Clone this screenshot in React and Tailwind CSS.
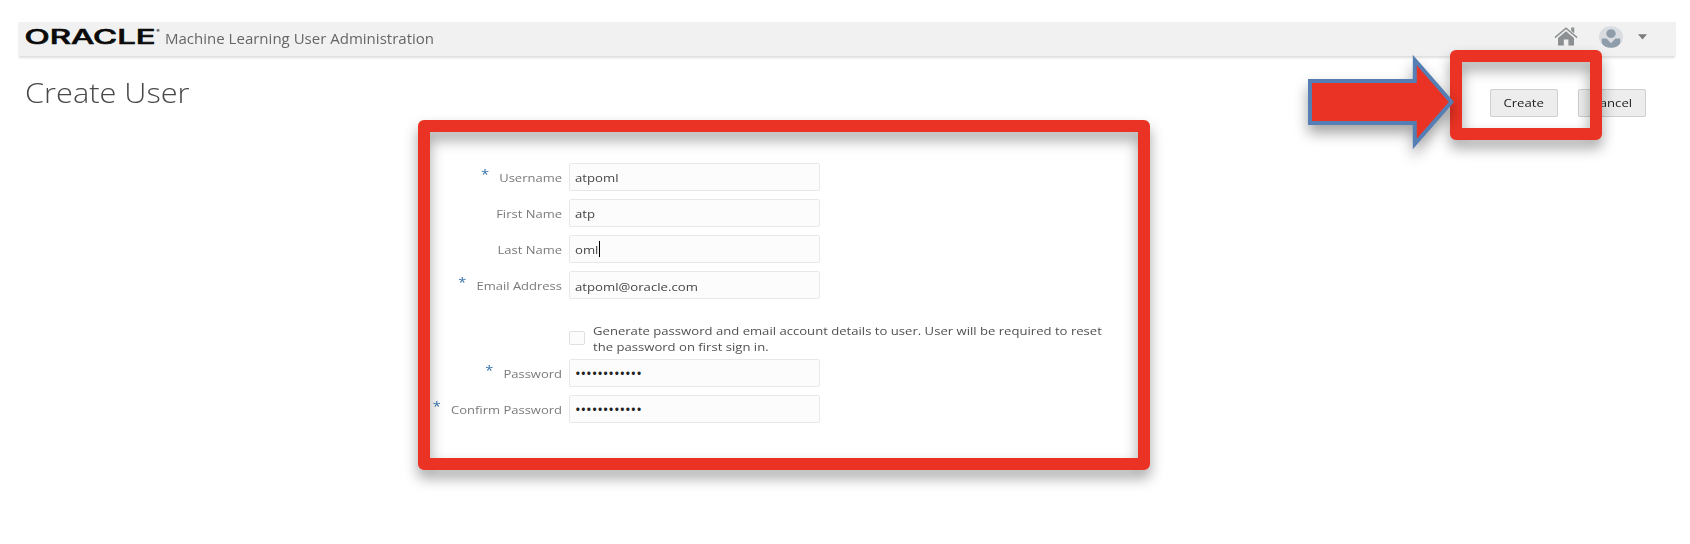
const fields = [
  { label: 'Username', required: true, value: 'atpoml' },
  { label: 'First Name', value: 'atp' },
  { label: 'Last Name', value: 'oml', focused: true },
  { label: 'Email Address', required: true, value: 'atpoml@oracle.com' },
];

const passwords = [
  { label: 'Password', required: true, secret: '••••••••••••' },
  { label: 'Confirm Password', required: true, secret: '••••••••••••' },
];

function Field({ label, required, value, secret, focused }) {
  return (
    <div className="flex h-7 items-center">
      <label className="flex w-[144px] origin-right scale-x-[1.13] justify-end whitespace-nowrap pt-[2px] text-[11.5px] leading-7 text-[#7a7a7a]">
        {required && <span className="mr-[9px] -mt-[4px] h-7 text-[13px] text-[#3672ad]">*</span>}
        {label}
      </label>
      <div className="ml-[7px] flex h-7 w-[251px] items-center rounded-[2px] border border-[#e8e8e8] bg-[#fcfcfc] pl-[5px]">
        {secret ? (
          <span className="pt-[1px] text-[15px] leading-none tracking-[-0.08px] text-[#222]">{secret}</span>
        ) : (
          <span className="origin-left scale-x-[1.145] pt-[2px] text-[11.5px] leading-none text-[#444]">{value}</span>
        )}
        {focused && <span className="ml-[4px] h-4 w-px bg-black" />}
      </div>
    </div>
  );
}

function Button({ children }) {
  return (
    <button className="flex h-7 w-[68px] items-center justify-center rounded-[2px] border border-[#cfcfcf] bg-[#ededed] text-[11.5px] text-[#222]">
      <span className="scale-x-[1.145]">{children}</span>
    </button>
  );
}

export default function App() {
  return (
    <div className="relative h-[544px] w-[1690px] overflow-hidden bg-white pt-[22px] font-['Open_Sans','Noto_Sans',sans-serif]">
      <header className="ml-[18px] flex h-[34px] w-[1658px] items-center bg-[#f1f1f1] shadow-[0_3px_2px_-1px_rgba(0,0,0,0.13)]">
        <svg className="ml-[7px] h-[34px] w-[136px]" viewBox="0 0 136 34">
          <text x="-0.5" y="21.7" textLength="131" lengthAdjust="spacingAndGlyphs" fontFamily="Inter, sans-serif" fontWeight="500" fontSize="19.5" fill="#0a0a0a" stroke="#0a0a0a" strokeWidth="0.6">ORACLE</text>
          <circle cx="133" cy="8.3" r="1.5" fill="#777" />
        </svg>
        <h2 className="ml-[4px] -mt-[2px] origin-left scale-x-[1.073] whitespace-nowrap text-[14px] text-[#666]">Machine Learning User Administration</h2>
        <div className="ml-auto flex items-center pr-[29px] -mt-[5px]">
          <svg className="h-[19px] w-[24px]" viewBox="0 0 24 19">
            <path d="M17.2 .6h3v5.7l-3-2.6z" fill="#8d9092" />
            <path d="M.9 10.6 12 1.2l11.1 9.4" fill="none" stroke="#8d9092" strokeWidth="1.5" />
            <path d="M4 11 12 4.2l8 6.8V18.5h-5.6v-6H9.8v6H4z" fill="#8d9092" />
          </svg>
          <svg className="ml-[21px] h-[22px] w-[24px]" viewBox="0 0 24 22">
            <ellipse cx="12" cy="11" rx="12" ry="10.8" fill="#d9dde1" />
            <ellipse cx="12" cy="7.6" rx="4.7" ry="4.3" fill="#8f9dab" />
            <path d="M2.8 12.6H7.6L12 17.2l4.4-4.6h4.8v4.6c-2 2.9-5.3 4.6-9.2 4.6s-7.2-1.7-9.2-4.6z" fill="#8f9dab" />
          </svg>
          <svg className="ml-[15px] h-[6px] w-[9px]" viewBox="0 0 9 6">
            <path d="M0 .3h9L4.5 5.5z" fill="#7d7d7d" />
          </svg>
        </div>
      </header>

      <div className="flex h-[107px] justify-between pl-[25px] pr-[44px]">
        <h1 className="mt-[17px] origin-left scale-x-[1.097] text-[28px] font-light leading-[39px] text-[#484848]">Create User</h1>
        <div className="mt-[33px] flex gap-5">
          <Button>Create</Button>
          <Button>Cancel</Button>
        </div>
      </div>

      <form className="ml-[418px] w-[732px]">
        <div className="flex flex-col gap-[8.1px]">
          {fields.map((f) => <Field key={f.label} {...f} />)}
        </div>
        <div className="mt-[23.7px] flex h-9 items-center">
          <span className="ml-[151px] mt-[-6px] h-[14px] w-4 rounded-[2px] border border-[#e0e0e0] bg-[#fcfcfc]" />
          <p className="ml-2 mt-[-4px] origin-left scale-x-[1.139] whitespace-nowrap text-[11.5px] leading-4 text-[#505050]">
            Generate password and email account details to user. User will be required to reset
            <br />
            the password on first sign in.
          </p>
        </div>
        <div className="flex flex-col gap-[8px]">
          {passwords.map((f) => <Field key={f.label} {...f} />)}
        </div>
      </form>

      <div className="absolute left-[418px] top-[120px] h-[350px] w-[732px] rounded-[6px] border-[12px] border-[#ea3324] drop-shadow-[0_8px_7px_rgba(0,0,0,0.36)]" />
      <div className="absolute left-[1450px] top-[50px] h-[90px] w-[152px] rounded-[6px] border-[12px] border-[#ea3324] drop-shadow-[0_8px_7px_rgba(0,0,0,0.36)]" />
      <svg className="absolute left-[1300px] top-[50px] h-[110px] w-[160px] overflow-visible drop-shadow-[0_8px_7px_rgba(0,0,0,0.36)]" viewBox="0 0 160 110">
        <path d="M10 31h104.8V10l36.6 42-36.6 42V73H10z" fill="#ea3324" stroke="#557eb5" strokeWidth="4" />
      </svg>
    </div>
  );
}
